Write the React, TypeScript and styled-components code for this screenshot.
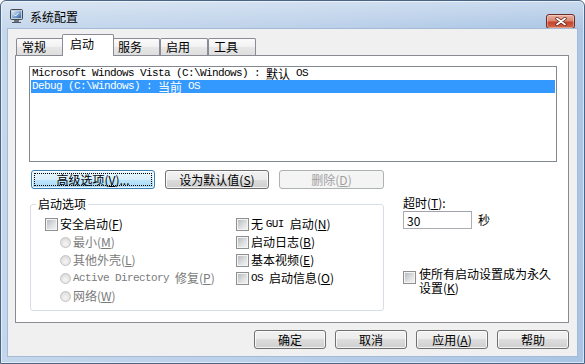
import React from 'react';
import styled, { createGlobalStyle, css } from 'styled-components';

const GlobalStyle = createGlobalStyle`
  html, body { margin: 0; padding: 0; width: 585px; height: 364px; overflow: hidden; background: #ffffff; }
  body { font-family: "Noto Sans CJK SC", "Liberation Sans", sans-serif; font-size: 12px; color: #000; }
  * { box-sizing: border-box; }
`;

const CJK = `"Noto Sans CJK SC", "Liberation Sans", sans-serif`;

const Window = styled.div`
  width: 585px;
  height: 364px;
  display: flex;
  flex-direction: column;
  border: 1px solid #4a6485;
  border-radius: 6px 6px 0 0;
  padding: 0 7px 7px 7px;
  background:
    linear-gradient(to bottom, rgba(255, 255, 255, 0.35), rgba(255, 255, 255, 0) 28px),
    linear-gradient(100deg, #c6d8ec 0%, #bcd1ea 45%, #a9c4e4 100%);
  box-shadow: inset 0 0 0 1px rgba(255, 255, 255, 0.55);
`;

const TitleBar = styled.div`
  height: 28px;
  flex: none;
  display: flex;
  align-items: center;
  padding-top: 3px;
`;

const TitleIcon = styled.svg`
  width: 16px;
  height: 16px;
  margin-left: 1px;
  margin-top: -2px;
  flex: none;
`;

const TitleText = styled.span`
  margin-left: 5px;
  font-family: ${CJK};
  font-size: 12px;
  line-height: 14px;
  color: #000;
`;

const CloseButton = styled.div`
  margin-left: auto;
  margin-right: 2px;
  align-self: flex-start;
  margin-top: 10px;
  width: 29px;
  height: 15px;
  border: 1px solid #6e2c22;
  border-radius: 3px;
  display: flex;
  align-items: center;
  justify-content: center;
  background: linear-gradient(to bottom, #eab1a3 0%, #d98873 45%, #c5442c 55%, #d3694c 100%);
  box-shadow: inset 0 0 0 1px rgba(255, 255, 255, 0.35);
`;

const Client = styled.div`
  flex: 1;
  min-height: 0;
  display: flex;
  flex-direction: column;
  background: #f0f0f0;
  padding: 5px 8px 7px 7px;
  box-shadow: 0 0 0 1px #a4bad6;
`;

const TabStrip = styled.div`
  height: 21px;
  flex: none;
  display: flex;
  align-items: flex-end;
  padding-left: 1px;
`;

const Tab = styled.div<{ $active?: boolean }>`
  width: 48px;
  height: 17px;
  border: 1px solid #898c95;
  border-bottom: none;
  border-radius: 2px 2px 0 0;
  padding-left: 5px;
  display: flex;
  align-items: center;
  font-size: 12px;
  line-height: 14px;
  background: linear-gradient(to bottom, #fbfbfb 0%, #f1f1f1 50%, #e7e7e7 50%, #dedede 100%);
  ${(p) =>
    p.$active &&
    css`
      width: 52px;
      height: 22px;
      margin: 0 -2px -1px -2px;
      padding-left: 7px;
      padding-bottom: 3px;
      background: #ffffff;
      position: relative;
      z-index: 1;
    `}
`;

const Panel = styled.div`
  flex: 1;
  min-height: 0;
  background: #ffffff;
  border: 1px solid #898c95;
  padding: 10px 11px 0 13px;
  display: flex;
  flex-direction: column;
`;

const ListBox = styled.div`
  height: 96px;
  flex: none;
  border: 1px solid #828790;
  background: #ffffff;
`;

const ListItem = styled.div<{ $selected?: boolean }>`
  height: 13px;
  margin: 0 1px;
  padding-left: 1px;
  font-family: "Liberation Mono", ${CJK};
  font-size: 11px;
  letter-spacing: -0.6px;
  line-height: 13px;
  white-space: pre;
  color: #000;
  ${(p) =>
    p.$selected &&
    css`
      background: #3399ff;
      color: #ffffff;
    `}
`;

const Han = styled.span`
  display: inline-block;
  vertical-align: top;
  height: 13px;
  line-height: 13px;
  font-family: ${CJK};
  font-size: 12px;
  letter-spacing: 0;
`;

const Mono = styled.span`
  font-family: "Liberation Mono", monospace;
  font-size: 11px;
  letter-spacing: -0.6px;
`;

const Key = styled.span`
  text-decoration: underline;
  text-underline-offset: 1px;
`;

const ButtonRow = styled.div`
  display: flex;
  gap: 10px;
  margin-top: 8px;
  margin-left: 2px;
`;

const Button = styled.div<{ $w: number; $focused?: boolean; $disabled?: boolean }>`
  width: ${(p) => p.$w}px;
  height: 19px;
  flex: none;
  border: 1px solid #707070;
  border-radius: 3px;
  display: flex;
  align-items: center;
  justify-content: center;
  font-size: 12px;
  line-height: 14px;
  color: #000;
  position: relative;
  background: linear-gradient(to bottom, #f2f2f2 0%, #ebebeb 50%, #dddddd 50%, #cfcfcf 100%);
  box-shadow: inset 0 0 0 1px rgba(255, 255, 255, 0.75);
  ${(p) =>
    p.$focused &&
    css`
      border-color: #3c7fb1;
      background: linear-gradient(to bottom, #eaf6fd 0%, #d9f0fc 50%, #bee6fd 50%, #a7d9f5 100%);
      &::after {
        content: '';
        position: absolute;
        inset: 2px;
        border: 1px dotted #000;
        border-radius: 1px;
      }
    `}
  ${(p) =>
    p.$disabled &&
    css`
      border-color: #adb2b5;
      background: #f4f4f4;
      color: #a0a0a0;
      box-shadow: none;
    `}
`;

const Lower = styled.div`
  display: flex;
  margin-top: 8px;
  margin-left: 1px;
`;

const Group = styled.fieldset`
  width: 355px;
  margin: 0;
  padding: 4px 0 5px 14px;
  border: 1px solid #d5dfe5;
  border-radius: 3px;
  min-inline-size: 0;
`;

const Legend = styled.legend`
  margin-left: -9px;
  padding: 0 2px;
  font-size: 12px;
  line-height: 14px;
  color: #000;
`;

const Columns = styled.div`
  display: flex;
`;

const Column = styled.div<{ $w?: number }>`
  display: flex;
  flex-direction: column;
  ${(p) => p.$w && `width: ${p.$w}px;`}
`;

const OptionRow = styled.div<{ $indent?: boolean; $disabled?: boolean }>`
  height: 18px;
  display: flex;
  align-items: center;
  font-size: 12px;
  line-height: 14px;
  white-space: pre;
  color: ${(p) => (p.$disabled ? '#7a7a7a' : '#000')};
  padding-left: ${(p) => (p.$indent ? 15 : 0)}px;
`;

const CheckBox = styled.span`
  width: 13px;
  height: 13px;
  flex: none;
  margin-right: 2px;
  border: 1px solid #8e8f8f;
  padding: 1px;
  background: #f4f4f4;
  display: inline-block;
  &::after {
    content: '';
    display: block;
    width: 100%;
    height: 100%;
    background: linear-gradient(135deg, #b8bcc1 0%, #dcdee0 55%, #f2f2f2 100%);
  }
`;

const Radio = styled.span`
  width: 11px;
  height: 11px;
  flex: none;
  margin-right: 2px;
  border-radius: 50%;
  border: 1px solid #c3c3c3;
  background: radial-gradient(circle at 50% 65%, #f6f6f6 0%, #e2e2e2 60%, #d2d2d2 100%);
  display: inline-block;
`;

const Side = styled.div`
  margin-left: 19px;
  display: flex;
  flex-direction: column;
`;

const SideLabel = styled.div`
  font-size: 12px;
  line-height: 12px;
`;

const TimeoutRow = styled.div`
  display: flex;
  align-items: center;
  margin-top: 2px;
  font-size: 12px;
`;

const TextBox = styled.input`
  width: 69px;
  height: 18px;
  border: 1px solid #abadb3;
  border-top-color: #a0a3aa;
  background: #ffffff;
  padding: 0 0 0 3px;
  margin: 0;
  font-family: ${CJK};
  font-size: 12px;
  line-height: 16px;
  color: #000;
  outline: none;
`;

const Unit = styled.span`
  margin-left: 6px;
  line-height: 14px;
`;

const PermanentRow = styled.div`
  display: flex;
  align-items: flex-start;
  margin-top: 38px;
`;

const PermanentBox = styled(CheckBox)`
  margin-top: 4px;
  margin-right: 3px;
`;

const PermanentText = styled.div`
  width: 138px;
  font-size: 12px;
  line-height: 14px;
`;

const PermanentLine = styled.span`
  display: inline-block;
  vertical-align: top;
  height: 14px;
  line-height: 14px;
  white-space: nowrap;
`;

const Footer = styled.div`
  display: flex;
  justify-content: flex-end;
  gap: 9px;
  margin-top: 7px;
  flex: none;
`;

const tabs = ['常规', '启动', '服务', '启用', '工具'];

export default function App() {
  return (
    <>
      <GlobalStyle />
      <Window>
        <TitleBar>
          <TitleIcon viewBox="0 0 16 16">
            <defs>
              <linearGradient id="scr" x1="0" y1="0" x2="1" y2="1">
                <stop offset="0" stopColor="#e9f2fb" />
                <stop offset="0.5" stopColor="#7fa9d6" />
                <stop offset="1" stopColor="#2f5f9c" />
              </linearGradient>
            </defs>
            <rect x="1.5" y="1.5" width="12" height="10" rx="1" fill="#c9ced6" stroke="#3f4752" />
            <rect x="3" y="3" width="9" height="7" fill="url(#scr)" />
            <path d="M5 6.5l1.5 1.5 3-3" stroke="#ffffff" strokeWidth="1" fill="none" />
            <rect x="5" y="12" width="5" height="2" fill="#6b7480" />
            <rect x="3" y="14" width="9" height="1" fill="#4f5864" />
          </TitleIcon>
          <TitleText>系统配置</TitleText>
          <CloseButton>
            <svg width="12" height="9" viewBox="0 0 12 9">
              <path d="M2 1.5l8 6M10 1.5l-8 6" stroke="#5a1c12" strokeWidth="3.2" strokeLinecap="round" />
              <path d="M2 1.5l8 6M10 1.5l-8 6" stroke="#ffffff" strokeWidth="1.8" strokeLinecap="round" />
            </svg>
          </CloseButton>
        </TitleBar>
        <Client>
          <TabStrip>
            {tabs.map((t) => (
              <Tab key={t} $active={t === '启动'}>
                {t}
              </Tab>
            ))}
          </TabStrip>
          <Panel>
            <ListBox>
              <ListItem>
                {'Microsoft Windows Vista (C:\\Windows) : '}
                <Han>默认</Han>
                {' OS'}
              </ListItem>
              <ListItem $selected>
                {'Debug (C:\\Windows) : '}
                <Han>当前</Han>
                {' OS'}
              </ListItem>
            </ListBox>
            <ButtonRow>
              <Button $w={124} $focused>
                高级选项(<Key>V</Key>)...
              </Button>
              <Button $w={104}>
                设为默认值(<Key>S</Key>)
              </Button>
              <Button $w={105} $disabled>
                删除(<Key>D</Key>)
              </Button>
            </ButtonRow>
            <Lower>
              <Group>
                <Legend>启动选项</Legend>
                <Columns>
                  <Column $w={191}>
                    <OptionRow>
                      <CheckBox />
                      安全启动(<Key>F</Key>)
                    </OptionRow>
                    <OptionRow $indent $disabled>
                      <Radio />
                      最小(<Key>M</Key>)
                    </OptionRow>
                    <OptionRow $indent $disabled>
                      <Radio />
                      其他外壳(<Key>L</Key>)
                    </OptionRow>
                    <OptionRow $indent $disabled>
                      <Radio />
                      <Mono>{'Active Directory '}</Mono>修复(<Key>P</Key>)
                    </OptionRow>
                    <OptionRow $indent $disabled>
                      <Radio />
                      网络(<Key>W</Key>)
                    </OptionRow>
                  </Column>
                  <Column>
                    <OptionRow>
                      <CheckBox />
                      {'无 '}
                      <Mono>{'GUI '}</Mono>
                      启动(<Key>N</Key>)
                    </OptionRow>
                    <OptionRow>
                      <CheckBox />
                      启动日志(<Key>B</Key>)
                    </OptionRow>
                    <OptionRow>
                      <CheckBox />
                      基本视频(<Key>E</Key>)
                    </OptionRow>
                    <OptionRow>
                      <CheckBox />
                      <Mono>{'OS '}</Mono>
                      启动信息(<Key>O</Key>)
                    </OptionRow>
                  </Column>
                </Columns>
              </Group>
              <Side>
                <SideLabel>
                  超时(<Key>T</Key>):
                </SideLabel>
                <TimeoutRow>
                  <TextBox readOnly value="30" />
                  <Unit>秒</Unit>
                </TimeoutRow>
                <PermanentRow>
                  <PermanentBox />
                  <PermanentText>
                    <PermanentLine>使所有启动设置成为永久</PermanentLine>
                    <PermanentLine>
                      设置(<Key>K</Key>)
                    </PermanentLine>
                  </PermanentText>
                </PermanentRow>
              </Side>
            </Lower>
          </Panel>
          <Footer>
            <Button $w={72}>确定</Button>
            <Button $w={72}>取消</Button>
            <Button $w={72}>
              应用(<Key>A</Key>)
            </Button>
            <Button $w={72}>帮助</Button>
          </Footer>
        </Client>
      </Window>
    </>
  );
}
